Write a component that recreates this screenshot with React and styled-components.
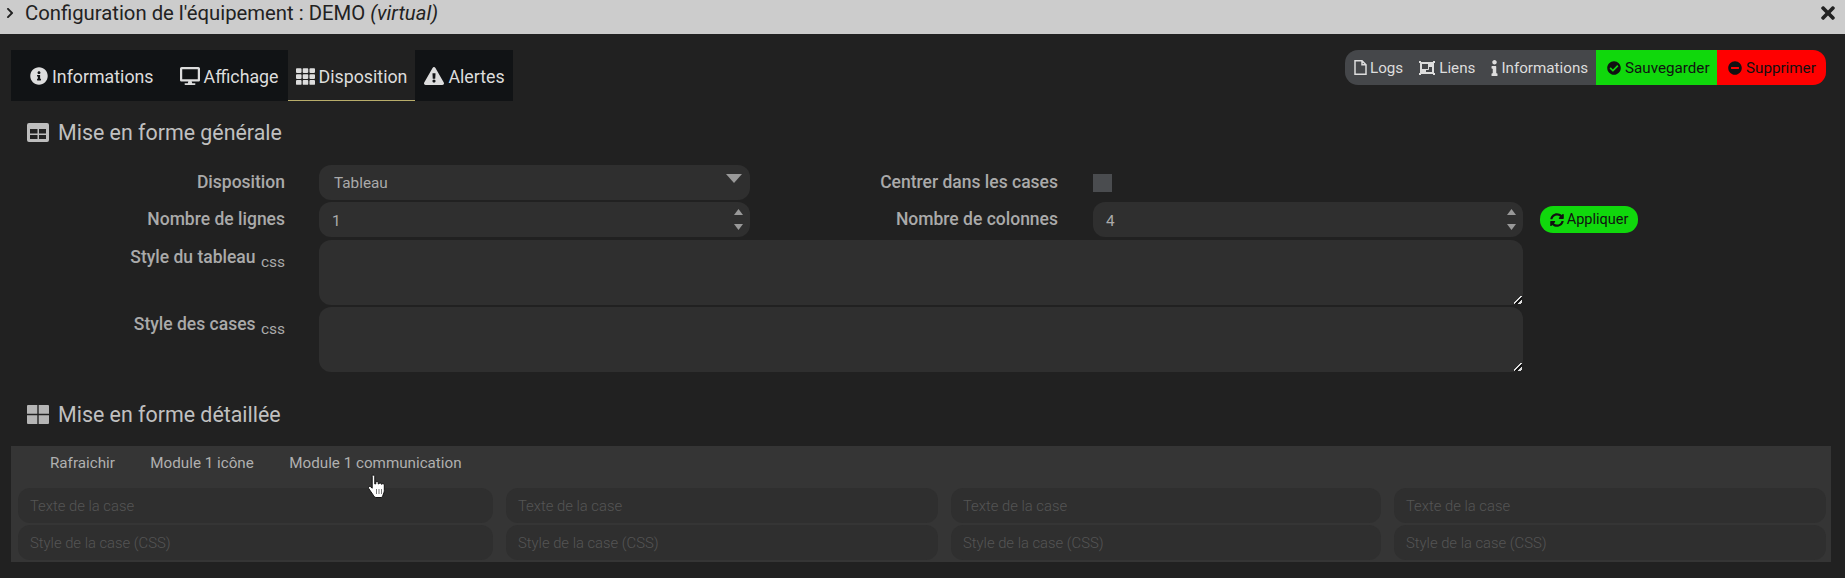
import React from 'react';
import styled, { createGlobalStyle } from 'styled-components';
import { FaInfoCircle, FaDesktop, FaTh, FaExclamationTriangle, FaObjectGroup, FaInfo, FaCheckCircle, FaMinusCircle, FaSyncAlt, FaTimes, FaChevronRight } from 'react-icons/fa';

const Global = createGlobalStyle`
  html, body { margin: 0; padding: 0; background: #212121; }
  body { font-family: Roboto, "Liberation Sans", sans-serif; overflow: hidden; }
`;
const Page = styled.div`
  width: 1845px; height: 578px; position: relative; overflow: hidden; background: #212121;
`;
const TitleBar = styled.header`
  height: 34px; background: #ccc; color: #222; display: flex; align-items: center;
  padding: 0 7px 8px 4px; box-sizing: border-box; font-size: 20.3px;
`;
const TitleText = styled.span`
  margin-left: 9px; flex: 1; em { font-style: italic; }
`;
const TopRow = styled.div`
  display: flex; justify-content: space-between; align-items: flex-start;
  padding: 16px 19px 0 11px;
`;
const Tabs = styled.nav`
  display: flex; height: 51px; background: #111315;
`;
const Tab = styled.div`
  display: flex; align-items: center; gap: 4px; padding: 2px ${p => p.$pr}px 0 ${p => p.$pl}px;
  color: #ddd; font-size: 17.8px; box-sizing: border-box;
  background: ${p => p.$active ? '#212121' : 'transparent'};
  border-bottom: 1px solid ${p => p.$active ? '#b8ad6a' : 'transparent'};
`;
const ActionBar = styled.div`
  display: flex; height: 35px; border-radius: 13px; overflow: hidden; font-size: 15.2px;
`;
const ActionGroup = styled.div`
  display: flex; align-items: center; background: #45474a; color: #ddd; padding: 0 7px 0 9px; gap: 16px; width: 251px; box-sizing: border-box;
`;
const ActionItem = styled.span`
  display: flex; align-items: center; gap: ${p => p.$gap || 3}px;
`;
const InfoGlyph = styled(FaInfo)`
  width: 7px; height: 16px;
`;
const ActionButton = styled.div`
  display: flex; align-items: center; gap: 4px; color: #111; background: ${p => p.$bg};
  width: ${p => p.$w}px; box-sizing: border-box; padding-left: 11px;
`;
const Heading = styled.h2`
  margin: ${p => p.$mt}px 0 ${p => p.$mb || 0}px; font-weight: 400; font-size: 21.4px; color: #c0c0c0; display: flex; align-items: center; gap: 9px;
  padding-left: 27px; height: 24px;
`;
const FormGrid = styled.div`
  display: grid; grid-template-columns: 308px 431px 343px 430px auto; grid-auto-rows: min-content;
  row-gap: 2px; padding-left: 11px; margin-top: 21px;
`;
const Label = styled.label`
  text-align: right; padding-right: ${p => p.$pr || 34}px; font-size: 17.5px; font-weight: 500; color: #aaa;
  line-height: 35px; white-space: nowrap; margin-top: ${p => p.$mt || 0}px;
  small { font-size: 15.5px; font-weight: 400; position: relative; top: 4px; margin-left: 1px; }
`;
const Field = styled.div`
  height: 35px; background: #2f2f2f; border-radius: 12px; color: #aaa; font-size: 15.3px;
  display: flex; align-items: center; padding: ${p => p.$num ? '2px 0 0 13px' : '0 0 0 15px'}; position: relative; box-sizing: border-box;
`;
const Spin = styled.span`
  position: absolute; right: 7px; top: 7px; bottom: 7px; display: flex; flex-direction: column; justify-content: space-between;
`;
const Arrow = styled.svg`
  display: block; fill: #999;
`;
const SelectArrow = styled.span`
  position: absolute; right: 8px; top: 9px; display: flex;
`;
const CheckCell = styled.div`
  display: flex; align-items: center; height: 35px;
`;
const Check = styled.span`
  width: 19px; height: 18px; background: #4a4c4f; display: block;
`;
const Apply = styled.div`
  margin: 4px 0 0 17px; height: 27px; width: 98px; background: #10d80c; color: #111; border-radius: 13px;
  display: flex; align-items: center; justify-content: center; gap: 3px; font-size: 14.5px;
`;
const TextArea = styled.textarea`
  grid-column: 2 / span 3; height: 65px; display: block; width: 100%; box-sizing: border-box; background: #2f2f2f; border: 0; outline: 0;
  border-radius: 12px; color: #aaa; resize: both; margin-top: ${p => p.$mt || 0}px;
  &::-webkit-resizer {
    background: linear-gradient(135deg, transparent 40%, #ddd 40%, #ddd 55%, #111 55%, #111 64%, transparent 64%, transparent 72%, #ddd 72%, #ddd 88%, transparent 88%) no-repeat right 1px bottom 1px / 8px 8px;
  }
`;
const Panel = styled.section`
  margin: 0 14px 0 11px; background: #353535; height: 116px; box-sizing: border-box; padding-top: 5px;
`;
const PanelBar = styled.div`
  display: flex; height: 23px; align-items: center; font-size: 15.2px; color: #b0b0b0; padding-left: 39px; gap: 35.5px;
`;
const CellGrid = styled.div`
  display: grid; grid-template-columns: 475px 432px 430px 432px; column-gap: 13px; row-gap: 2px;
  padding: 14px 0 0 7px;
`;
const Cell = styled.div`
  height: 35px; background: #2f2f2f; border-radius: 12px; color: #555; font-size: 14.8px; font-weight: 300;
  display: flex; align-items: center; padding-left: 12px;
`;
const Cursor = styled.svg`
  position: absolute; left: 367px; top: 474px;
`;

const cells = [0, 1, 2, 3];

const TableIcon = () => (
  <svg width="22" height="19" viewBox="0 0 22 19" aria-hidden="true">
    <path fill="#bdbdbd" fillRule="evenodd" d="M2 0h18a2 2 0 0 1 2 2v15a2 2 0 0 1-2 2H2a2 2 0 0 1-2-2V2a2 2 0 0 1 2-2zM3 6v4.500h7.500V6zM12 6v4.500h7V6zM3 12v4h7.500v-4zM12 12v4h7v-4z" />
  </svg>
);
const GridIcon = () => (
  <svg width="22" height="19" viewBox="0 0 22 19" aria-hidden="true">
    <path fill="#b5b5b5" d="M1 0h9.300v8.700H0V1a1 1 0 0 1 1-1zM11.700 0H21a1 1 0 0 1 1 1v7.700H11.700zM0 10.300h10.300V19H1a1 1 0 0 1-1-1zM11.700 10.300H22V18a1 1 0 0 1-1 1h-9.300z" />
  </svg>
);
const FileIcon = () => (
  <svg width="13" height="15" viewBox="0 0 13 15" aria-hidden="true">
    <path fill="none" stroke="currentColor" strokeWidth="1.500" d="M1 .8h7l4 4V14.200H1zM8 .8v4h4" />
  </svg>
);
const SpinUp = () => <Arrow width="9" height="6" viewBox="0 0 9 6"><path d="M4.500 0L9 6H0z" /></Arrow>;
const SpinDown = () => <Arrow width="9" height="6" viewBox="0 0 9 6"><path d="M0 0h9L4.500 6z" /></Arrow>;

export default function App() {
  return (
    <Page>
      <Global />
      <TitleBar>
        <FaChevronRight size={12} />
        <TitleText>Configuration de l'équipement : DEMO <em>(virtual)</em></TitleText>
        <FaTimes size={20} />
      </TitleBar>
      <TopRow>
        <Tabs>
          <Tab $pl={19} $pr={18}><FaInfoCircle size={18} />Informations</Tab>
          <Tab $pl={8} $pr={9}><FaDesktop size={20} />Affichage</Tab>
          <Tab $active $pl={8} $pr={8}><FaTh size={19} />Disposition</Tab>
          <Tab $pl={9} $pr={8}><FaExclamationTriangle size={20} />Alertes</Tab>
        </Tabs>
        <ActionBar>
          <ActionGroup>
            <ActionItem><FileIcon />Logs</ActionItem>
            <ActionItem $gap={4}><FaObjectGroup size={16} />Liens</ActionItem>
            <ActionItem><InfoGlyph />Informations</ActionItem>
          </ActionGroup>
          <ActionButton $bg="#10d80c" $w={121}><FaCheckCircle size={14} />Sauvegarder</ActionButton>
          <ActionButton $bg="#ff0000" $w={109}><FaMinusCircle size={14} />Supprimer</ActionButton>
        </ActionBar>
      </TopRow>
      <Heading $mt={19}><TableIcon />Mise en forme générale</Heading>
      <FormGrid>
        <Label>Disposition</Label>
        <Field>Tableau<SelectArrow><Arrow width="16" height="9" viewBox="0 0 16 9"><path d="M0 0h16L8 9z" /></Arrow></SelectArrow></Field>
        <Label $pr={35}>Centrer dans les cases</Label>
        <CheckCell><Check /></CheckCell>
        <span />
        <Label>Nombre de lignes</Label>
        <Field $num>1<Spin><SpinUp /><SpinDown /></Spin></Field>
        <Label $pr={35}>Nombre de colonnes</Label>
        <Field $num>4<Spin><SpinUp /><SpinDown /></Spin></Field>
        <Apply><FaSyncAlt size={14} />Appliquer</Apply>
        <Label $mt={1}>Style du tableau <small>css</small></Label>
        <TextArea $mt={1} />
        <span />
        <Label>Style des cases <small>css</small></Label>
        <TextArea />
      </FormGrid>
      <Heading $mt={30} $mb={20}><GridIcon />Mise en forme détaillée</Heading>
      <Panel>
        <PanelBar>
          <span>Rafraichir</span>
          <span>Module 1 icône</span>
          <span>Module 1 communication</span>
        </PanelBar>
        <CellGrid>
          {cells.map(i => <Cell key={`t${i}`}>Texte de la case</Cell>)}
          {cells.map(i => <Cell key={`s${i}`}>Style de la case (CSS)</Cell>)}
        </CellGrid>
      </Panel>
      <Cursor width="20" height="25" viewBox="0 0 20 25" aria-hidden="true">
        <path d="M6 1c1 0 1.800.8 1.800 1.800V10l1-.2V8.500c0-1.400 2.200-1.400 2.400 0v1.300l.8.100c.2-1.400 2.200-1.200 2.300.2l.7.2c.4-1 2.300-.8 2.300.6v5.600c0 2-.8 3.200-1.300 4.500-.3 1.200-.8 2.500-2 2.500H9c-1.300 0-2-1.200-2.700-2.300l-4.500-6.500c-1-1.500.5-3 1.800-2l1.600 1.500V2.800C5.200 1.800 5 1 6 1z" fill="#fff" stroke="#111" strokeWidth="1" />
        <path d="M9.500 15v5M12 15v5M14.500 15v5" stroke="#555" strokeWidth=".8" />
      </Cursor>
    </Page>
  );
}
